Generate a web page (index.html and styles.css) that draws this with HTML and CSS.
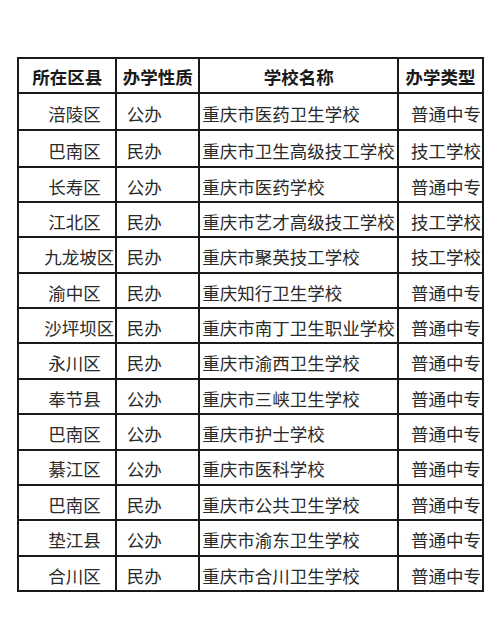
FILE: index.html
```html
<!DOCTYPE html>
<html lang="zh-CN">
<head>
<meta charset="utf-8">
<title>重庆市学校名单</title>
<link rel="stylesheet" href="styles.css">
</head>
<body>
<div class="sheet">
  <div class="grid">
    <div class="cell head">所在区县</div>
    <div class="cell head">办学性质</div>
    <div class="cell head">学校名称</div>
    <div class="cell head">办学类型</div>

    <div class="cell area">涪陵区</div><div class="cell kind">公办</div><div class="cell name">重庆市医药卫生学校</div><div class="cell type">普通中专</div>
    <div class="cell area">巴南区</div><div class="cell kind">民办</div><div class="cell name">重庆市卫生高级技工学校</div><div class="cell type">技工学校</div>
    <div class="cell area">长寿区</div><div class="cell kind">公办</div><div class="cell name">重庆市医药学校</div><div class="cell type">普通中专</div>
    <div class="cell area">江北区</div><div class="cell kind">民办</div><div class="cell name">重庆市艺才高级技工学校</div><div class="cell type">技工学校</div>
    <div class="cell area wide">九龙坡区</div><div class="cell kind">民办</div><div class="cell name">重庆市聚英技工学校</div><div class="cell type">技工学校</div>
    <div class="cell area">渝中区</div><div class="cell kind">民办</div><div class="cell name">重庆知行卫生学校</div><div class="cell type">普通中专</div>
    <div class="cell area wide">沙坪坝区</div><div class="cell kind">民办</div><div class="cell name">重庆市南丁卫生职业学校</div><div class="cell type">普通中专</div>
    <div class="cell area">永川区</div><div class="cell kind">民办</div><div class="cell name">重庆市渝西卫生学校</div><div class="cell type">普通中专</div>
    <div class="cell area">奉节县</div><div class="cell kind">公办</div><div class="cell name">重庆市三峡卫生学校</div><div class="cell type">普通中专</div>
    <div class="cell area">巴南区</div><div class="cell kind">公办</div><div class="cell name">重庆市护士学校</div><div class="cell type">普通中专</div>
    <div class="cell area">綦江区</div><div class="cell kind">公办</div><div class="cell name">重庆市医科学校</div><div class="cell type">普通中专</div>
    <div class="cell area">巴南区</div><div class="cell kind">民办</div><div class="cell name">重庆市公共卫生学校</div><div class="cell type">普通中专</div>
    <div class="cell area">垫江县</div><div class="cell kind">公办</div><div class="cell name">重庆市渝东卫生学校</div><div class="cell type">普通中专</div>
    <div class="cell area">合川区</div><div class="cell kind">民办</div><div class="cell name">重庆市合川卫生学校</div><div class="cell type">普通中专</div>
  </div>
</div>
</body>
</html>
```

FILE: styles.css
```css
html, body {
  margin: 0;
  padding: 0;
  background: #ffffff;
}

.sheet {
  padding: 56.5px 0 0 17.3px;
}

.grid {
  display: grid;
  width: max-content;
  grid-template-columns: 98px 83px 198.7px 85px;
  grid-template-rows: 35.2px 37.3px 36.7px repeat(12, 35.36px);
  border-top: 2px solid #1a1a1a;
  border-left: 2px solid #1a1a1a;
  font-family: "Noto Sans CJK SC", "Noto Sans", sans-serif;
  font-size: 17.5px;
  color: #2a2a2a;
}

.cell {
  box-sizing: border-box;
  display: flex;
  align-items: center;
  border-right: 2px solid #1a1a1a;
  border-bottom: 2px solid #1a1a1a;
  white-space: nowrap;
  line-height: 1;
  padding-top: 4px;
}

.head {
  justify-content: center;
  font-weight: 700;
  color: #1a1a1a;
}

.area {
  padding-left: 29px;
}

.area.wide {
  padding-left: 25px;
}

.kind {
  padding-left: 9.5px;
}

.name {
  padding-left: 2px;
}

.type {
  justify-content: flex-end;
  padding-right: 1px;
}
```
